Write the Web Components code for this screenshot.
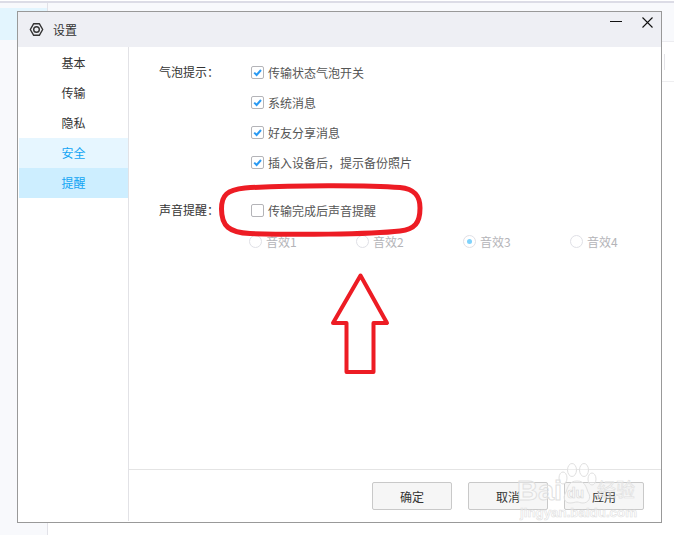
<!DOCTYPE html>
<html lang="zh"><head><meta charset="utf-8">
<style>
html,body{margin:0;height:100%;overflow:hidden;background:#fff}
body{font:12px "Noto Sans CJK SC","Liberation Sans",sans-serif;color:#444}
</style></head><body>
<app-backdrop></app-backdrop>
<settings-dialog>
  <nav-item>基本</nav-item><nav-item>传输</nav-item><nav-item>隐私</nav-item>
  <nav-item state="hover">安全</nav-item><nav-item state="active">提醒</nav-item>
</settings-dialog>
<note-overlay></note-overlay>
<script>
function def(name, html){
  const t=document.createElement('template');t.innerHTML=html;
  customElements.define(name,class extends HTMLElement{
    connectedCallback(){
      if(this.shadowRoot)return;
      this.attachShadow({mode:'open'}).appendChild(t.content.cloneNode(true));
    }
  });
}
def('app-backdrop',`<style>
:host{display:grid;grid-template-columns:47px 1px 1fr;grid-template-rows:1px 2px 39px 1fr;width:674px;height:535px;position:absolute;inset:0;background:#fff}
.top{grid-column:1/4;background:#dcdce6;grid-row:2}
.l{grid-column:1;grid-row:3/5;background:#f8f9fc;position:relative}
.sel{height:32px;margin-top:5px;background:#e3f5fe}
.v{grid-column:2;grid-row:3/5;background:#e2e2e8}
.r{grid-column:3;grid-row:3;background:#f8f9fc;border-bottom:1px solid #ececf0}
.rest{grid-column:3;grid-row:4}
.rule{height:1px;background:#eeeef0;margin-top:39px}
.tick{position:absolute;left:664px;top:54px;width:1px;height:16px;background:#e4e4e8}
</style><div class="top"></div><div class="l"><div class="sel"></div></div><div class="v"></div><div class="r"></div><div class="rest"><div class="rule"></div></div><div class="tick"></div>`);

def('nav-item',`<style>
:host{display:flex;height:30px;box-sizing:border-box;padding-bottom:2px;align-items:center;justify-content:center;color:#333;font-size:12px}
:host([state=hover]){background:#e6f6ff;color:#12a5f4}
:host([state=active]){background:#cdeeff;color:#12a5f4}
</style><slot></slot>`);

def('check-row',`<style>
:host{display:flex;align-items:center;gap:4px;height:30px;color:#555;font-size:12px}
.b{width:11px;height:11px;border:1px solid #b4b4b8;border-radius:2px;background:#fff;display:block;flex:none}
svg{display:none;width:11px;height:11px}
:host([checked]) svg{display:block}
::slotted(span){font-family:"Noto Sans CJK TC",sans-serif}
</style><span class="b"><svg viewBox="0 0 11 11"><path d="M2.2 5.6 4.6 8 9 3" fill="none" stroke="#2a9af3" stroke-width="2"/></svg></span><span><slot></slot></span>`);

def('radio-opt',`<style>
:host{display:flex;flex:none;align-items:center;gap:4px;width:107px;height:20px;color:#b4b4b8;font-size:12px}
.r{width:11px;height:11px;border:1px solid #dfe0e6;border-radius:50%;display:grid;place-items:center;flex:none;background:#fff}
i{display:none;width:5px;height:5px;border-radius:50%;background:#7fd2fb}
:host([on]) i{display:block}
</style><span class="r"><i></i></span><slot></slot>`);

def('flat-btn',`<style>
:host{display:flex;align-items:center;justify-content:center;width:78px;height:26px;border:1px solid #c9c9c9;border-radius:2px;background:#f6f6f6;color:#333;font-size:12px}
</style><slot></slot>`);

def('settings-dialog',`<style>
:host{display:flex;flex-direction:column;position:absolute;left:17px;top:11px;width:643px;height:510px;border:1px solid #999;background:#fff;box-sizing:content-box}
header{flex:none;height:35px;background:#eeeff4;display:flex;align-items:center;padding:0 8px 0 11px;gap:9px;color:#333}
header .g{width:15px;height:15px;flex:none}
header .sp{flex:1}
header .min{width:12px;height:1px;background:#111;margin:0 11px 17px 0}
header .x{width:11px;height:11px;margin-bottom:15px}
.body{flex:1;display:flex;min-height:0}
aside{width:109px;border-right:1px solid #e2e2e6;padding:1px 0 0 1px;flex:none;margin-bottom:1px}
.main{flex:1;display:flex;flex-direction:column;min-width:0}
.content{flex:1;padding:10px 0 0 30px;color:#333}
.grp{display:flex}
.lab{width:92px;height:30px;line-height:30px;flex:none}
.lab span{font-family:"Noto Sans CJK TC",sans-serif}
.opts{display:flex;flex-direction:column}
.radios{display:flex;margin:6px 0 0 90px}
.g2{margin-top:18px}
footer{flex:none;height:53px;box-sizing:border-box;border-top:1px solid #e4e4e4;display:flex;gap:16px;align-items:flex-start;padding:12px 0 0 243px}
</style>
<header>
<svg class="g" viewBox="0 0 16 16" fill="none" stroke="#333" stroke-width="1.500"><path d="M5 1.800h6l3.600 6.200L11 14.200H5L1.400 8z" stroke-linejoin="round"/><circle cx="8" cy="8" r="3"/></svg>
<span>设置</span><span class="sp"></span><span class="min"></span>
<svg class="x" viewBox="0 0 11 11" stroke="#111" stroke-width="1.100"><path d="M.5.5l10 10M10.500.5l-10 10"/></svg>
</header>
<div class="body"><aside><slot></slot></aside>
<div class="main"><div class="content">
<div class="grp"><div class="lab">气泡提示<span>：</span></div><div class="opts">
<check-row checked>传输状态气泡开关</check-row><check-row checked>系统消息</check-row><check-row checked>好友分享消息</check-row><check-row checked>插入设备后<span>，</span>提示备份照片</check-row></div></div>
<div class="grp g2"><div class="lab">声音提醒<span>：</span></div><div class="opts"><check-row>传输完成后声音提醒</check-row></div></div>
<div class="radios"><radio-opt>音效1</radio-opt><radio-opt>音效2</radio-opt><radio-opt on>音效3</radio-opt><radio-opt>音效4</radio-opt></div>
</div>
<footer><flat-btn>确定</flat-btn><flat-btn>取消</flat-btn><flat-btn>应用</flat-btn></footer>
</div></div>`);

def('note-overlay',`<style>
:host{position:absolute;inset:0;display:block;pointer-events:none}
svg{position:absolute;left:0;top:0;width:674px;height:535px}
text{font-family:"Liberation Sans",sans-serif}
</style>
<svg viewBox="0 0 674 535">
<path d="M221.500 209C221.500 195 227 190 245 188C290 185 370 185 400 187.500C415 189 420 196 420 208C420 223 415 229 400 231C370 234.500 290 235 250 233.500C229 232.500 221.500 226 221.500 209Z" fill="none" stroke="#ed1c24" stroke-width="5"/>
<path d="M360.500 275.500 387 323H373.500V372H346.500V323H333Z" fill="none" stroke="#ed1c24" stroke-width="4" stroke-linejoin="round"/>
<g fill="#fff" fill-opacity=".35" stroke="#e0e0e0" stroke-width="1">
<ellipse cx="563" cy="478" rx="4" ry="6"/><ellipse cx="572" cy="470" rx="4.500" ry="6.500"/><ellipse cx="584" cy="470" rx="4.500" ry="6.500"/><ellipse cx="592" cy="479" rx="4" ry="6"/>
<path d="M577 481c8 0 9 6 11 11 4 6 0 11-5 11-3 0-4-1-6-1s-4 1-7 1c-5 0-8-5-4-11 2-5 3-11 11-11z"/>
<text x="517" y="500" font-size="27" font-weight="700" stroke-width=".9" textLength="45" lengthAdjust="spacingAndGlyphs">Bai</text>
<text x="567" y="498" font-size="14" font-weight="700" stroke="#d8d8d8" stroke-width=".6">du</text>
<text x="597" y="497" font-size="19" stroke-width=".6" style="font-family:'Noto Sans CJK SC'">经验</text>
<text x="520" y="517" font-size="13.500" font-weight="700" stroke-width=".6" textLength="117" lengthAdjust="spacingAndGlyphs">jingyan.baidu.com</text>
</g></svg>`);
</script></body></html>
